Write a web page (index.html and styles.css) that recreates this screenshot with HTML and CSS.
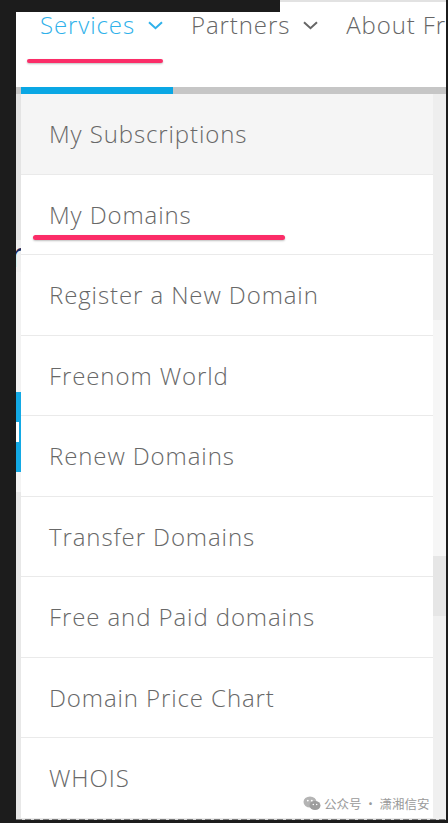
FILE: index.html
```html
<!DOCTYPE html>
<html>
<head>
<meta charset="utf-8">
<link rel="stylesheet" href="styles.css">
</head>
<body>
<div class="page">
  <div class="topstrip"><div class="topdark"></div><div class="toplight"></div></div>
  <header class="header">
    <nav class="nav">
      <span class="nav-item active">Services
        <svg class="chev" width="15" height="9" viewBox="0 0 15 9"><polyline points="1,1.2 7.5,7.2 14,1.2" fill="none" stroke="currentColor" stroke-width="2"/></svg>
      </span>
      <span class="nav-item">Partners
        <svg class="chev" width="15" height="9" viewBox="0 0 15 9"><polyline points="1,1.2 7.5,7.2 14,1.2" fill="none" stroke="currentColor" stroke-width="2"/></svg>
      </span>
      <span class="nav-item">About Freenom</span>
    </nav>
    <div class="mark mark-nav"></div>
  </header>
  <div class="panel">
    <div class="panel-bar"><div class="panel-bar-fill"></div></div>
    <div class="panel-body">
      <div class="lstrip">
        <div class="ls-gap1"></div>
        <div class="ls-r">r</div>
        <div class="ls-gap2"></div>
        <div class="ls-blue"><div class="ls-blue-dot"></div></div>
        <div class="ls-gap3"></div>
        <div class="ls-gray"></div>
      </div>
      <ul class="menu">
        <li class="menu-item first">My Subscriptions</li>
        <li class="menu-item">My Domains<span class="mark mark-item"></span></li>
        <li class="menu-item">Register a New Domain</li>
        <li class="menu-item">Freenom World</li>
        <li class="menu-item">Renew Domains</li>
        <li class="menu-item">Transfer Domains</li>
        <li class="menu-item">Free and Paid domains</li>
        <li class="menu-item">Domain Price Chart</li>
        <li class="menu-item">WHOIS</li>
      </ul>
      <div class="rstrip">
        <div class="rs-a"></div>
        <div class="rs-b"></div>
        <div class="rs-c"></div>
        <div class="rs-d"></div>
      </div>
    </div>
    <div class="peek"></div>
  </div>
  <div class="watermark">
    <svg class="wx" width="18" height="15" viewBox="0 0 18 15">
      <ellipse cx="7" cy="6" rx="6.5" ry="5.5" fill="#b4b4b4"/>
      <ellipse cx="12" cy="9.5" rx="5.5" ry="4.6" fill="#9d9d9d"/>
      <circle cx="4.8" cy="4.6" r="0.9" fill="#fff"/>
      <circle cx="8.8" cy="4.6" r="0.9" fill="#fff"/>
      <circle cx="10.3" cy="8.6" r="0.75" fill="#fff"/>
      <circle cx="13.7" cy="8.6" r="0.75" fill="#fff"/>
    </svg>
    <span>公众号 · 潇湘信安</span>
  </div>
</div>
</body>
</html>
```
FILE: styles.css
```css
* { box-sizing: border-box; }
html, body {
  margin: 0;
  padding: 0;
}
body {
  width: 448px;
  height: 823px;
  overflow: hidden;
  background: #1c1c1c;
  font-family: "Open Sans", "Noto Sans", sans-serif;
}
.page {
  position: relative;
  margin-left: 16px;
  width: 430px;
  height: 820px;
  background: #ffffff;
  overflow: hidden;
}
.topstrip {
  display: flex;
  height: 12px;
}
.topdark {
  width: 264px;
  background: #1c1c1c;
}
.toplight {
  flex: 1;
  background: #ffffff;
  border-top: 2px solid #e2e2e2;
}
.header {
  height: 75px;
  padding-top: 1px;
  background: #ffffff;
}
.nav {
  display: flex;
  align-items: center;
  height: 24px;
  padding-left: 24px;
  white-space: nowrap;
  font-size: 24px;
  font-weight: 300;
  line-height: 24px;
  color: #666666;
  letter-spacing: 0.9px;
}
.nav-item {
  display: flex;
  align-items: center;
  margin-right: 28px;
}
.nav-item.active {
  color: #2fb1ea;
}
.chev {
  margin-left: 13px;
  margin-top: 1px;
  flex-shrink: 0;
}
.mark {
  display: block;
  background: #fb2d68;
  border-radius: 3px;
  box-shadow: 0 1px 2px rgba(0,0,0,0.25);
}
.mark-nav {
  margin-top: 22px;
  margin-left: 11px;
  width: 136px;
  height: 4px;
}
.panel {
  background: #ffffff;
}
.panel-bar {
  height: 7px;
  background: #c6c6c6;
  padding-left: 5px;
}
.panel-bar-fill {
  width: 152px;
  height: 100%;
  background: #0aa7e4;
}
.panel-body {
  display: flex;
}
.lstrip {
  width: 5px;
  min-width: 0;
  flex-shrink: 0;
  overflow: hidden;
  display: flex;
  flex-direction: column;
  background: #ececec;
}
.ls-gap1 { height: 146px; background: #e4e4e4; }
.ls-r {
  height: 32px;
  overflow: hidden;
  font-size: 34px;
  line-height: 28px;
  color: #1d2b5e;
  text-indent: -6px;
  background: #efefef;
}
.ls-gap2 { height: 120px; background: #f2f2f2; }
.ls-blue {
  height: 80px;
  background: #13a9e5;
  padding-top: 30px;
}
.ls-blue-dot {
  width: 3px;
  height: 20px;
  background: #ffffff;
}
.ls-gap3 { height: 20px; background: #f4f4f4; }
.ls-gray { flex: 1; background: #e8e8e8; }
.menu {
  list-style: none;
  margin: 0;
  padding: 0;
  width: 412px;
  flex-shrink: 0;
  background: #ffffff;
}
.menu-item {
  position: relative;
  height: 80.5px;
  line-height: 79.5px;
  padding-left: 28px;
  border-bottom: 1px solid #eaeaea;
  font-size: 24px;
  font-weight: 300;
  letter-spacing: 0.9px;
  color: #686868;
  white-space: nowrap;
}
.menu-item.first {
  background: #f5f5f5;
}
.mark-item {
  position: absolute;
  left: 12px;
  top: 60px;
  width: 252px;
  height: 5px;
}
.rstrip {
  width: 13px;
  flex-shrink: 0;
  display: flex;
  flex-direction: column;
}
.rs-a { height: 226px; background: #eeeeee; }
.rs-b { height: 236px; background: #f6f6f6; }
.rs-c { height: 60px; background: #e6e6e6; }
.rs-d { flex: 1; background: #f0f0f0; }
.peek {
  height: 3px;
  background: repeating-linear-gradient(90deg, #7a7a7a 0 6px, #d9d9d9 6px 9px);
}
.watermark {
  position: absolute;
  left: 287px;
  top: 796px;
  display: flex;
  align-items: center;
  gap: 3px;
  font-family: "Noto Sans CJK SC", "Noto Sans", sans-serif;
  font-size: 12.5px;
  line-height: 15px;
  color: #9a9a9a;
}
```
